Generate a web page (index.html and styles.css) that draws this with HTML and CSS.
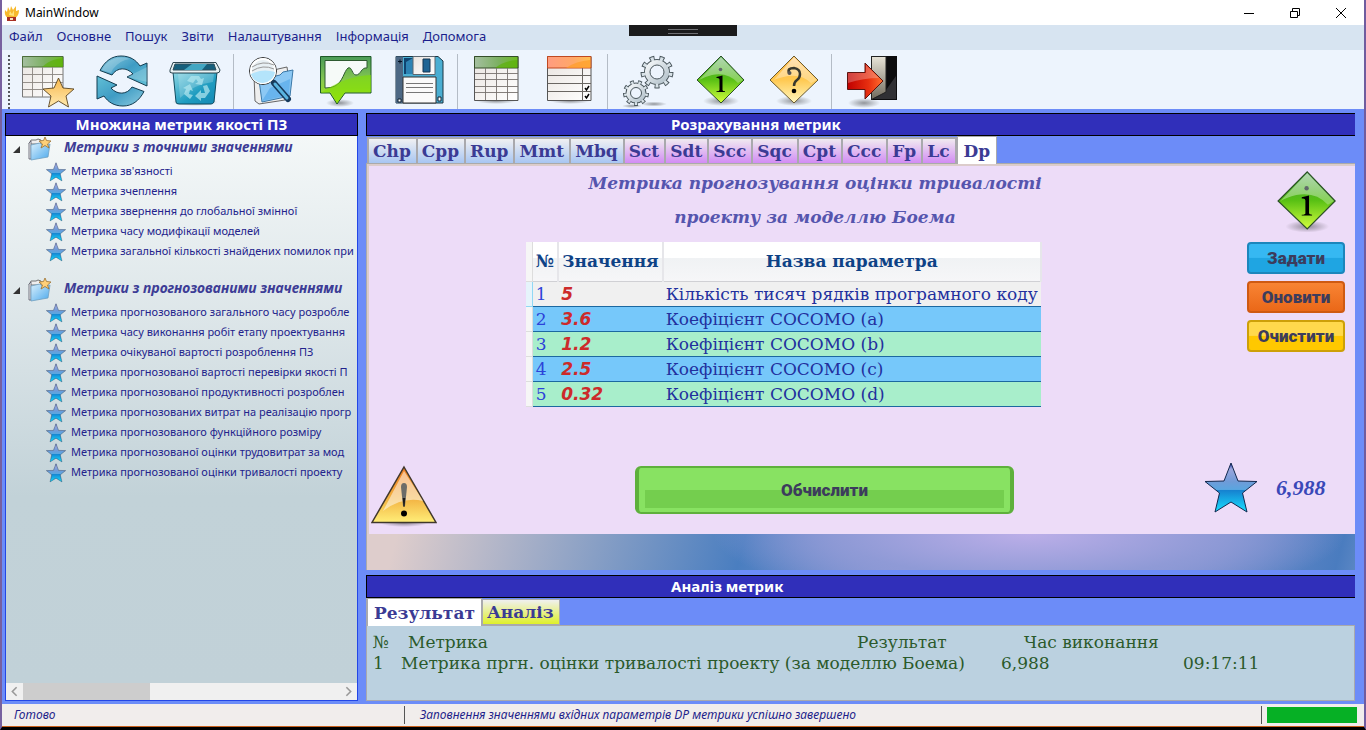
FILE: index.html
```html
<!DOCTYPE html>
<html lang="uk">
<head>
<meta charset="utf-8">
<title>MainWindow</title>
<link rel="stylesheet" href="styles.css">
</head>
<body>
<svg class="defs" aria-hidden="true">
  <defs>
    <linearGradient id="gBlue" x1="0" y1="0" x2="1" y2="1"><stop offset="0" stop-color="#8ccbe0"/><stop offset=".5" stop-color="#3f9cc4"/><stop offset="1" stop-color="#62c0d6"/></linearGradient>
    <linearGradient id="gGreenHead" x1="0" y1="0" x2="1" y2="0"><stop offset="0" stop-color="#a5bfa0"/><stop offset=".55" stop-color="#7cb062"/><stop offset="1" stop-color="#6cbb20"/></linearGradient>
    <linearGradient id="gOrangeHead" x1="0" y1="0" x2="1" y2="0"><stop offset="0" stop-color="#ff9c80"/><stop offset=".6" stop-color="#ffa868"/><stop offset="1" stop-color="#ffc050"/></linearGradient>
    <linearGradient id="gPaper" x1="0" y1="0" x2="1" y2="1"><stop offset="0" stop-color="#e9e4e0"/><stop offset="1" stop-color="#fff"/></linearGradient>
    <linearGradient id="gGold" x1="0" y1="0" x2="0" y2="1"><stop offset="0" stop-color="#f8b84e"/><stop offset="1" stop-color="#ffeab0"/></linearGradient>
    <linearGradient id="gStar" x1="0" y1="0" x2="0" y2="1"><stop offset="0" stop-color="#1b2fa8"/><stop offset=".12" stop-color="#9ba6dd"/><stop offset=".38" stop-color="#6f9bd8"/><stop offset=".54" stop-color="#5aa6e0"/><stop offset=".56" stop-color="#1682d0"/><stop offset="1" stop-color="#18e0ff"/></linearGradient>
    <linearGradient id="gLime" x1="0" y1="0" x2="0" y2="1"><stop offset="0" stop-color="#3f9a3c"/><stop offset=".5" stop-color="#58c014"/><stop offset="1" stop-color="#d4ff3c"/></linearGradient>
    <linearGradient id="gAmber" x1="0" y1="0" x2="0" y2="1"><stop offset="0" stop-color="#ffb848"/><stop offset=".5" stop-color="#ffc850"/><stop offset="1" stop-color="#fff8c0"/></linearGradient>
    <linearGradient id="gGloss" x1="0" y1="0" x2="0" y2="1"><stop offset="0" stop-color="#fff" stop-opacity=".6"/><stop offset="1" stop-color="#fff" stop-opacity=".25"/></linearGradient>
    <linearGradient id="gFolder" x1="0" y1="0" x2="1" y2="1"><stop offset="0" stop-color="#d8effc"/><stop offset="1" stop-color="#4aa8ec"/></linearGradient>
    <linearGradient id="gWarn" x1="0" y1="0" x2="0" y2="1"><stop offset="0" stop-color="#ee7a20"/><stop offset=".55" stop-color="#f2b040"/><stop offset="1" stop-color="#ffee78"/></linearGradient>
    <linearGradient id="gRed" x1="0" y1="0" x2="1" y2="0"><stop offset="0" stop-color="#c00000"/><stop offset=".6" stop-color="#e83010"/><stop offset="1" stop-color="#ff7030"/></linearGradient>
    <linearGradient id="gDoor" x1="0" y1="0" x2="0" y2="1"><stop offset="0" stop-color="#e8e4d8"/><stop offset="1" stop-color="#706a5c"/></linearGradient>
    <linearGradient id="gMetal" x1="0" y1="0" x2="1" y2="1"><stop offset="0" stop-color="#f4f7f9"/><stop offset="1" stop-color="#b4c2cb"/></linearGradient>
    <linearGradient id="gBin" x1="0" y1="0" x2="1" y2="1"><stop offset="0" stop-color="#8fd8e4"/><stop offset=".6" stop-color="#1f9cc0"/><stop offset="1" stop-color="#1488b4"/></linearGradient>
    <linearGradient id="gScreen" x1="0" y1="0" x2="0" y2="1"><stop offset="0" stop-color="#4a9a58"/><stop offset=".5" stop-color="#86c850"/><stop offset="1" stop-color="#a8ec10"/></linearGradient>
    <radialGradient id="gShade"><stop offset="0" stop-color="#222" stop-opacity=".45"/><stop offset="1" stop-color="#222" stop-opacity="0"/></radialGradient>
    <symbol id="star" viewBox="0 0 54 54"><path d="M27 2 L34 20 L53 20.500 L38.500 32 L43 51 L27 41 L11 51 L15.500 32 L1 20.500 L20 20 Z" fill="url(#gStar)" stroke="#12284e" stroke-width="1"/></symbol>
    <symbol id="info" viewBox="0 0 56 56">
      <ellipse cx="29" cy="49" rx="18" ry="5" fill="url(#gShade)"/>
      <path d="M29 4 L52 28 L29 51 L5 28 Z" fill="url(#gLime)" stroke="#2c5028"/>
      <path d="M29 5 L51 28 L46 31 Q36 20 20 23 Q12 25 7 28 Z" fill="url(#gGloss)"/>
      <circle cx="28.500" cy="17.500" r="1.800" fill="#60686a"/>
      <path d="M24.500 25 L30.500 23.500 V38 Q30.500 39.200 33 39.300 V40 H24.500 V39.300 Q27.500 39.200 27.500 38 V27.500 Q27.500 25.500 24.500 26 Z" fill="#000"/>
    </symbol>
    <symbol id="folder" viewBox="0 0 26 26">
      <path d="M2 8 L4 4 L9 4 L11 3 L14 4 L14 8 Z" fill="#eee" stroke="#555" stroke-width=".8"/>
      <path d="M2 7 L4 5 L4 23 L2 23 Z" fill="#f4f4f4" stroke="#556" stroke-width=".8"/>
      <path d="M4 9 L13 7 L15 9 L23 8 L21 21 L4 24 Z" fill="url(#gFolder)" stroke="#6f9fc0" stroke-width=".8"/>
      <path d="M18 1 L19.500 4.500 L24 5 L20.500 8 L22 12 L18 9.500 L14 12 L15.500 8 L12 5 L16.500 4.500 Z" fill="#ffd078" stroke="#9a7030" stroke-width=".8"/>
    </symbol>
  </defs>
</svg>
<div class="window">
  <header class="titlebar">
    <svg class="app-icon" viewBox="0 0 16 16"><path d="M4 13 Q0 11 1 5 L3 7 L4 2 L6 6 L7 1 L9 5 L12 1 L12 6 L15 5 Q15 11 11 13 Z" fill="#f7b92c"/><path d="M5 10 L6 6 L8 9 L10 5 L10 11 Z" fill="#ffe27a"/><path d="M3 12 h9 v4 h-9 Z" fill="#a83024"/><path d="M6 13 h3 v2 h-3 Z" fill="#f6e2c0"/></svg>
    <h1>MainWindow</h1>
    <div class="win-buttons">
      <button type="button" aria-label="Згорнути"><svg viewBox="0 0 12 12"><path d="M1 6.500 H11"/></svg></button>
      <button type="button" aria-label="Відновити"><svg viewBox="0 0 12 12"><path d="M1.500 4.500 H8.500 V10.500 H1.500 Z M3.500 4 V1.500 H10.500 V8.500 H9"/></svg></button>
      <button type="button" aria-label="Закрити"><svg viewBox="0 0 12 12"><path d="M1 1 L11 11 M11 1 L1 11"/></svg></button>
    </div>
  </header>
  <nav class="menubar">
    <button type="button">Файл</button><button type="button">Основне</button><button type="button">Пошук</button><button type="button">Звіти</button><button type="button">Налаштування</button><button type="button">Інформація</button><button type="button">Допомога</button>
    <div class="grip"></div>
  </nav>
  <div class="toolbar">
    <span class="dots"></span>
    <button type="button" aria-label="Нова таблиця"><svg viewBox="0 0 56 56">
      <path d="M2.500 4.500 H43 V45 H2.500 Z" fill="url(#gPaper)" stroke="#777"/>
      <path d="M2.500 4.500 H43 V15 H2.500 Z" fill="url(#gGreenHead)" stroke="#4d6e3a"/>
      <path d="M22 15 Q30 7 43 6 V15 Z" fill="#58b000" opacity=".6"/>
      <path d="M3 22.500 H43 M3 30.500 H43 M3 37.500 H43 M12.500 15 V45 M22.500 15 V45 M32.500 15 V45" stroke="#8a8580" stroke-width=".9" fill="none"/>
      <path d="M38.500 26 L43 36 L54 37 L46 44 L48.500 55 L38.500 49 L28.500 55 L31 44 L23 37 L34 36 Z" fill="url(#gGold)" stroke="#5a4420" stroke-width=".9"/></svg></button>
    <button type="button" aria-label="Оновити"><svg viewBox="0 0 56 56">
      <g fill="url(#gBlue)" stroke="#123c50"><path d="M6 18.500 C11 9 18 4 27 4 C36 4 42 8 46 14 L53 11 V34 L33 25 L39 22 C33 15 23 15 18 23 Z"/>
      <path d="M6 18.500 C11 9 18 4 27 4 C36 4 42 8 46 14 L53 11 V34 L33 25 L39 22 C33 15 23 15 18 23 Z" transform="rotate(180 28 29)"/></g>
      <path d="M8 18 C13 8 24 3 36 7 Q26 8 19 17 L17 21 Z M33 25 L53 15 V30 Z" fill="#fff" opacity=".2"/></svg></button>
    <button type="button" aria-label="Кошик"><svg viewBox="0 0 56 56">
      <ellipse cx="27" cy="50" rx="23" ry="4" fill="url(#gShade)"/>
      <path d="M5 20 H49 L46 50 Q45 52 43 52 H11 Q8 52 8 50 Z" fill="url(#gBin)" stroke="#0f4c60"/>
      <path d="M5 10.500 H48 L52 18 Q52 21 49 21 H4 Q1 21 2 18 Z" fill="#e8f2f4" stroke="#2e4650"/>
      <path d="M7 12 H46 L48 18 H5 Z" fill="#155f7c" stroke="#33505c"/><path d="M16 18 L24 12 H39 L34 18 Z" fill="#42a6c2"/>
      <path d="M10 22 H46 L45 30 Q26 32 12 46 Z" fill="#fff" opacity=".2"/>
      <g fill="#b4e8f0" opacity=".7"><path d="M19 29 L23 24 H31 L33 27 L36 26 L34 33 L27 32 L30 30 L28 27 L25 31 Z"/><path d="M35 34 L39 33 L42 39 L37 46 H33 V49 L27 44 L33 38 V41 H37 Z"/><path d="M22 47 L16 42 L18 37 L15 36 L22 32 L25 39 L22 38 L21 42 L25 43 Z"/></g></svg></button>
    <span class="sep"></span>
    <button type="button" aria-label="Пошук"><svg viewBox="0 0 56 56">
      <path d="M10 24 L34 17 L43 15 L44 22 L41 48 L15 52 L11 49 Z" fill="#eee" stroke="#666"/>
      <path d="M15 28 L36 23 L39 20 L49 18 L46 44 L18 50 Z" fill="#8cc8f4" stroke="#3a78a8"/><path d="M26 36 L46 27 L45 43 L18 49 Z" fill="#50a6ea" opacity=".6"/>
      <circle cx="19" cy="19" r="13.500" fill="#e8f0f4" stroke="#333"/><circle cx="19" cy="19" r="12" fill="none" stroke="#fff" stroke-width="2"/>
      <path d="M8 15 Q19 8 30 13 M8 19 Q19 12 30 17" stroke="#999" fill="none"/><path d="M7 22 Q19 16 31 20 Q30 29 19 31 Q9 30 7 22" fill="#b4e4fb"/>
      <path d="M30 31 L44 47" stroke="#163a5c" stroke-width="6" stroke-linecap="round"/><path d="M31 32 L43 46" stroke="#5ab4e0" stroke-width="3" stroke-linecap="round"/></svg></button>
    <button type="button" aria-label="Графік"><svg viewBox="0 0 56 56">
      <ellipse cx="22" cy="51" rx="14" ry="4" fill="url(#gShade)"/>
      <path d="M2.500 4.500 H53 V41 H27 L19 52 L12 41 H2.500 Z" fill="url(#gScreen)" stroke="#1e5a28"/>
      <path d="M7 8.500 H49 V16 C43 15 43 23 38 23 C34 23 34 14 30 16 C26 19 25 30 17 34 Q14 36 7 36 Z" fill="#f6faf8" stroke="#2e5a30"/>
      <path d="M3 41 Q27 24 53 23 V40 H27 L19 51 L13 40 Z" fill="#80e000" opacity=".6"/></svg></button>
    <button type="button" aria-label="Зберегти"><svg viewBox="0 0 56 56">
      <path d="M4 4.500 H46 L51 9 V51 H4 Z" fill="#4aaed2" stroke="#1a3442"/><path d="M4 4.500 H11 V51 H4 Z" fill="#4d6884"/>
      <path d="M12 6 H21 V22 H12 Z" fill="#0f4470"/><path d="M14 10 L21 6 V22 H14 Z" fill="#2d83b4"/>
      <path d="M21 4.500 H43 V22.500 H21 Z" fill="url(#gPaper)" stroke="#5a6670"/><path d="M31 7 H38 V20 H31 Z" fill="#1e6494" stroke="#143450"/>
      <path d="M11 25 H44 V51 H11 Z" fill="#fafafa" stroke="#333"/><path d="M14 31.500 H41 M14 35.500 H41 M14 40.500 H41" stroke="#777"/>
      <path d="M6 47 h3 v3 h-3 Z M46 45 h3 v4 h-3 Z" fill="#fff" stroke="#123"/><path d="M6 9.500 h4 M8 7.500 v4" stroke="#012"/></svg></button>
    <span class="sep"></span>
    <button type="button" aria-label="Таблиця"><svg viewBox="0 0 56 56">
      <ellipse cx="28" cy="49" rx="20" ry="3" fill="url(#gShade)"/>
      <path d="M6.500 4.500 H50 V48.500 H6.500 Z" fill="url(#gPaper)" stroke="#555"/>
      <path d="M6.500 4.500 H50 V16 H6.500 Z" fill="url(#gGreenHead)" stroke="#344e28"/><path d="M27 16 Q35 9 49 8 V16 Z" fill="#58b000" opacity=".6"/>
      <path d="M7 21.500 H50 M7 27.500 H50 M7 34.500 H50 M7 40.500 H50 M17.500 16 V48 M28.500 16 V48 M39.500 16 V48" stroke="#77726e" stroke-width=".9" fill="none"/></svg></button>
    <button type="button" aria-label="Список"><svg viewBox="0 0 56 56">
      <ellipse cx="28" cy="49" rx="20" ry="3" fill="url(#gShade)"/>
      <path d="M5.500 4.500 H49 V48.500 H5.500 Z" fill="url(#gPaper)" stroke="#555"/>
      <path d="M5.500 4.500 H49 V16 H5.500 Z" fill="url(#gOrangeHead)" stroke="#c04820"/><path d="M24 16 Q34 9 48 8 V16 Z" fill="#ff9c28" opacity=".7"/>
      <path d="M6 23.500 H49 M6 31.500 H49 M6 39.500 H49 M40.500 16 V48" stroke="#6a6662" fill="none"/>
      <path d="M43 36 L44.500 38 L47 34 M43 44 L44.500 46 L47 42" stroke="#000" stroke-width="1.500" fill="none"/></svg></button>
    <span class="sep"></span>
    <button type="button" aria-label="Налаштування"><svg viewBox="0 0 56 56">
      <ellipse cx="36" cy="52" rx="13" ry="2.500" fill="url(#gShade)"/><ellipse cx="14" cy="54" rx="10" ry="2" fill="url(#gShade)"/>
      <g fill="none">
        <circle cx="39" cy="20" r="13.500" pathLength="100" stroke="#4a565c" stroke-width="6" stroke-dasharray="5.500 5.611"/>
        <circle cx="39" cy="20" r="11" stroke="#4a565c" stroke-width="4"/>
        <circle cx="39" cy="20" r="13.500" pathLength="100" stroke="#d8e2e8" stroke-width="4" stroke-dasharray="3.500 7.611" stroke-dashoffset="-1"/>
        <circle cx="39" cy="20" r="9.500" stroke="url(#gMetal)" stroke-width="5"/><circle cx="39" cy="20" r="7" stroke="#4a565c"/>
        <circle cx="18" cy="41" r="10.500" pathLength="100" stroke="#4a565c" stroke-width="5" stroke-dasharray="5.500 5.611"/>
        <circle cx="18" cy="41" r="8.500" stroke="#4a565c" stroke-width="4"/>
        <circle cx="18" cy="41" r="10.500" pathLength="100" stroke="#d8e2e8" stroke-width="3" stroke-dasharray="3.500 7.611" stroke-dashoffset="-1"/>
        <circle cx="18" cy="41" r="7.500" stroke="url(#gMetal)" stroke-width="4"/><circle cx="18" cy="41" r="5.500" stroke="#4a565c"/>
      </g></svg></button>
    <button type="button" aria-label="Інформація"><svg><use href="#info"/></svg></button>
    <button type="button" aria-label="Довідка"><svg viewBox="0 0 56 56">
      <ellipse cx="28" cy="49" rx="18" ry="5" fill="url(#gShade)"/>
      <path d="M28 4 L52 28 L28 51 L4 28 Z" fill="url(#gAmber)" stroke="#6a5a30"/>
      <path d="M28 5 L51 28 L45 31 Q36 22 22 24 Q12 26 8 28 Z" fill="url(#gGloss)"/>
      <path d="M23 21 Q21 16 28 16 Q34 17 34 22 Q34 26 31 28 Q28 30 28 34" fill="none" stroke="#38382e" stroke-width="2.500"/><circle cx="23.500" cy="21" r="2" fill="#555"/><circle cx="28" cy="39" r="2.300" fill="#000"/></svg></button>
    <span class="sep"></span>
    <button type="button" aria-label="Вихід"><svg viewBox="0 0 56 56">
      <ellipse cx="22" cy="51" rx="16" ry="5" fill="url(#gShade)"/>
      <path d="M29 4 H55 V48 H29 Z" fill="#0c0c0e"/><path d="M44 38 L54 24 V47 H31 L44 40 Z" fill="#303034"/>
      <path d="M29.500 4.500 H44 V40 L29.500 47.500 Z" fill="url(#gDoor)" stroke="#222"/>
      <path d="M5.500 20.500 H23 V11 L41 29 L23 47 V37.500 H5.500 Z" fill="url(#gRed)" stroke="#5c1410"/><path d="M6 21 H24 V13 L37 26 Q22 26 6 31 Z" fill="#fff" opacity=".25"/></svg></button>
  </div>

  <main class="workspace">
    <section class="metrics">
      <h2 class="caption">Множина метрик якості ПЗ</h2>
      <div class="tree-box">
        <div class="tree">
          <div class="branch">
            <h3><i class="arrow"></i><svg><use href="#folder"/></svg>Метрики з точними значеннями</h3>
            <ul>
              <li><svg><use href="#star"/></svg>Метрика зв'язності</li>
              <li><svg><use href="#star"/></svg>Метрика зчеплення</li>
              <li><svg><use href="#star"/></svg>Метрика звернення до глобальної змінної</li>
              <li><svg><use href="#star"/></svg>Метрика часу модифікації моделей</li>
              <li><svg><use href="#star"/></svg>Метрика загальної кількості знайдених помилок при</li>
            </ul>
          </div>
          <div class="branch">
            <h3><i class="arrow"></i><svg><use href="#folder"/></svg>Метрики з прогнозованими значеннями</h3>
            <ul>
              <li><svg><use href="#star"/></svg>Метрика прогнозованого загального часу розробле</li>
              <li><svg><use href="#star"/></svg>Метрика часу виконання робіт етапу проектування</li>
              <li><svg><use href="#star"/></svg>Метрика очікуваної вартості розроблення ПЗ</li>
              <li><svg><use href="#star"/></svg>Метрика прогнозованої вартості перевірки якості П</li>
              <li><svg><use href="#star"/></svg>Метрика прогнозованої продуктивності розроблен</li>
              <li><svg><use href="#star"/></svg>Метрика прогнозованих витрат на реалізацію прогр</li>
              <li><svg><use href="#star"/></svg>Метрика прогнозованого функційного розміру</li>
              <li><svg><use href="#star"/></svg>Метрика прогнозованої оцінки трудовитрат за мод</li>
              <li><svg><use href="#star"/></svg>Метрика прогнозованої оцінки тривалості проекту</li>
            </ul>
          </div>
        </div>
        <div class="hscroll"><svg viewBox="0 0 16 16"><path d="M10 4 L6 8 L10 12"/></svg><div class="track"><div class="thumb"></div></div><svg viewBox="0 0 16 16"><path d="M6 4 L10 8 L6 12"/></svg></div>
      </div>
    </section>

    <div class="right">
      <section class="calc">
        <h2 class="caption wide">Розрахування метрик</h2>
        <div class="tabs" role="tablist">
          <button type="button" role="tab">Chp</button><button type="button" role="tab">Cpp</button><button type="button" role="tab">Rup</button><button type="button" role="tab">Mmt</button><button type="button" role="tab">Mbq</button><button type="button" role="tab" class="violet">Sct</button><button type="button" role="tab" class="violet">Sdt</button><button type="button" role="tab" class="violet">Scc</button><button type="button" role="tab" class="violet">Sqc</button><button type="button" role="tab" class="violet">Cpt</button><button type="button" role="tab" class="violet">Ccc</button><button type="button" role="tab" class="violet">Fp</button><button type="button" role="tab" class="violet">Lc</button><button type="button" role="tab" class="active" aria-selected="true">Dp</button>
        </div>
        <div class="sheet">
          <div class="form">
            <div class="upper">
              <div class="center">
                <h3>Метрика прогнозування оцінки тривалості<br>проекту за моделлю Боема</h3>
                <table class="params">
                  <thead><tr><th class="rowhead"></th><th>№</th><th>Значення</th><th>Назва параметра</th></tr></thead>
                  <tbody>
                    <tr class="picked"><td class="rowhead"></td><td>1</td><td>5</td><td>Кількість тисяч рядків програмного коду</td></tr>
                    <tr><td class="rowhead"></td><td>2</td><td>3.6</td><td>Коефіцієнт COCOMO (a)</td></tr>
                    <tr><td class="rowhead"></td><td>3</td><td>1.2</td><td>Коефіцієнт COCOMO (b)</td></tr>
                    <tr><td class="rowhead"></td><td>4</td><td>2.5</td><td>Коефіцієнт COCOMO (c)</td></tr>
                    <tr><td class="rowhead"></td><td>5</td><td>0.32</td><td>Коефіцієнт COCOMO (d)</td></tr>
                  </tbody>
                </table>
              </div>
              <div class="actions">
                <svg class="big-info"><use href="#info"/></svg>
                <button type="button" class="set">Задати</button>
                <button type="button" class="update">Оновити</button>
                <button type="button" class="clear">Очистити</button>
              </div>
            </div>
            <div class="lower">
              <svg class="warn" viewBox="0 0 66 62">
                <ellipse cx="33" cy="58" rx="24" ry="4" fill="url(#gShade)"/>
                <path d="M33 2 L65 57.500 H1 Z" fill="url(#gWarn)" stroke="#40382c" stroke-width="1.500"/>
                <path d="M33 6 L52 36 Q32 31 12 46 Z" fill="#fff" opacity=".5"/>
                <path d="M30 22 Q30 18 33 18 Q36 18 36 22 L34 41 H32 Z" fill="#6c6c68"/><path d="M31.700 33 H34.300 L33.500 42 H32.500 Z" fill="#1c1a16"/><circle cx="33" cy="48.500" r="3" fill="#000"/></svg>
              <button type="button" class="compute">Обчислити</button>
              <svg class="big-star"><use href="#star"/></svg>
              <output>6,988</output>
            </div>
          </div>
          <div class="strip"></div>
        </div>
      </section>

      <section class="analysis">
        <h2 class="caption wide">Аналіз метрик</h2>
        <div class="tabs second" role="tablist">
          <button type="button" role="tab" class="active" aria-selected="true">Результат</button><button type="button" role="tab" class="yellow">Аналіз</button>
        </div>
        <table class="results">
          <thead><tr><th>№</th><th>Метрика</th><th>Результат</th><th>Час виконання</th></tr></thead>
          <tbody><tr><td>1</td><td>Метрика пргн. оцінки тривалості проекту (за моделлю Боема)</td><td>6,988</td><td>09:17:11</td></tr></tbody>
        </table>
      </section>
    </div>
  </main>
  <footer class="status">
    <span class="ready">Готово</span>
    <span class="message">Заповнення значеннями вхідних параметрів DP метрики успішно завершено</span>
    <progress value="100" max="100" aria-label="Виконання"></progress>
  </footer>
</div>
</body>
</html>
```
FILE: styles.css
```css
* { box-sizing: border-box; }
body { margin: 0; background: #000; font-family: "Noto Sans", "Open Sans", sans-serif; }
h1, h2, h3, ul { margin: 0; padding: 0; font-size: inherit; }
button { margin: 0; padding: 0; border: 0; background: none; font: inherit; color: inherit; }
.defs { position: absolute; width: 0; height: 0; }

.window { display: flex; flex-direction: column; min-height: 100vh; border-left: 2px solid #77609f; border-right: 2px solid #6f5c9f; border-bottom: 3px solid #000; }

.titlebar { display: flex; align-items: center; height: 25px; padding-left: 2px; background: #fff; }
.app-icon { width: 16px; height: 16px; }
.titlebar h1 { flex: 1; padding-left: 5px; font-size: 12px; font-weight: 400; color: #000; }
.win-buttons { display: flex; }
.win-buttons button { display: flex; justify-content: center; width: 46px; }
.win-buttons svg { width: 12px; height: 12px; fill: none; stroke: #000; }

.menubar { position: relative; display: flex; gap: 14px; height: 25px; padding-left: 7px; background: #d7e4f1; font-size: 13px; line-height: 22px; color: #1b1e8c; }
.menubar button { height: 22px; }
.grip { position: absolute; top: 0; left: 46%; width: 108px; height: 11px; background: #1b1b1c; }
.grip::after { content: ""; display: block; width: 30px; height: 3px; margin: 4px auto; border: solid #6e6e72; border-width: 1px 0; }

.toolbar { display: flex; height: 59px; padding-left: 5px; background: #edf4fd; }
.toolbar button { display: flex; align-items: center; justify-content: center; width: 74px; height: 60px; }
.toolbar svg { width: 56px; height: 56px; }
.dots { width: 4px; margin: 5px 0 0; background: repeating-linear-gradient(#56585c 0 2px, transparent 2px 4px) 1px 0 / 2px 100% no-repeat; }
.sep { width: 1px; margin: 4px 1px 0 0; background: #b4bcc6; }

.workspace { flex: 1; display: flex; gap: 8px; padding: 4px 9px 3px 3px; background: #6c8cf8; }
.caption { height: 23px; border: 1px solid #000; background: #302fba; color: #fff; font-size: 15px; line-height: 20px; font-weight: 700; text-align: center; }
.caption.wide { border-right: 0; padding-left: 304px; text-align: left; }

.metrics { flex: 0 0 353px; min-width: 0; display: flex; flex-direction: column; }
.tree-box { flex: 1; display: flex; flex-direction: column; border: solid #2346e6; border-width: 0 1px 1px; }
.tree { flex: 1; overflow: hidden; background: linear-gradient(#f4f8f8, #dde6e9 33%, #c2d2d8 66%, #c1d1d8); color: #23238c; }
.branch { padding-bottom: 16px; }
.branch h3 { display: flex; height: 25px; padding-left: 7px; font-size: 14px; line-height: 22px; font-weight: 700; font-style: italic; white-space: nowrap; color: #3d3d96; }
.branch h3 svg { width: 26px; height: 26px; margin: 0 11px 0 7px; }
.arrow { width: 7px; height: 7px; margin-top: 10px; background: #333; clip-path: polygon(100% 0, 100% 100%, 0 100%); }
.branch ul { list-style: none; font-size: 11px; line-height: 20px; }
.branch li { display: flex; height: 20px; padding-left: 40px; white-space: nowrap; }
.branch li svg { flex: none; width: 20px; height: 20px; margin: 1px 5px 0 0; }
.hscroll { display: flex; height: 17px; background: #f0f0f0; }
.hscroll svg { width: 17px; height: 17px; fill: none; stroke: #999; stroke-width: 1.5; }
.track { flex: 1; }
.thumb { width: 40%; height: 100%; background: #cdcdcd; }

.right { flex: 1; min-width: 0; display: flex; flex-direction: column; gap: 5px; }
.calc { flex: 1; display: flex; flex-direction: column; }
.tabs { display: flex; align-items: flex-end; height: 28px; padding-left: 1px; border-bottom: 1px solid #aaa; font-family: "DejaVu Serif", serif; font-size: 17px; font-weight: 700; line-height: 24px; color: #3b3b94; }
.tabs button { height: 26px; padding: 0 5px 0 4px; border: solid #a9a9ad; border-width: 2px 2px 0 0; background: linear-gradient(#f0f0f2, #a8c6f2); }
.tabs button:first-child { border-left-width: 2px; }
.tabs .violet { background: linear-gradient(#f0eaf0, #d28cf4); }
.tabs .yellow { background: linear-gradient(#f0f0f0, #dff02a); }
.tabs .active { height: 28px; margin-bottom: -1px; padding: 0 6px; border-width: 1px 1px 0; background: #fff; }

.sheet { flex: 1; display: flex; flex-direction: column; border-left: 1px solid #aaa; background: #dccccb; padding: 2px 0 0; }
.form { flex: 1; display: flex; flex-direction: column; justify-content: space-between; margin-left: 2px; background: #eddcf8; }
.strip { height: 36px; background: radial-gradient(ellipse 32% 200% at 67% 0, #bbaee8, #8f9ad6 60%, transparent), linear-gradient(105deg, #decdcc 3%, #4a7ec0 38%, #8f98d4 55%, #8f98d4 77%, #4a7cbf 98%, #5a86c4); }
.upper { display: flex; }
.center { flex: 1; display: flex; flex-direction: column; align-items: center; }
.center h3 { padding-left: 62px; text-align: center; font: italic 700 17px/34px "DejaVu Serif", serif; color: #5555ae; }
.params { margin-top: 8px; border-collapse: collapse; font: 17px/24px "DejaVu Serif", serif; color: #22309e; }
.params th { height: 39px; padding: 0 3px; border-right: 2px solid #e6e6ea; border-bottom: 1px solid #d0d0d4; background: linear-gradient(#fff 40%, #f0f2f4 42%, #f6f6f8); color: #0e4286; }
.params td { height: 25px; padding: 0 3px; border-bottom: 1px solid #1c68a0; white-space: nowrap; }
.params tbody tr:nth-child(even) { background: #76c8fa; }
.params tbody tr:nth-child(odd) { background: #a8eecb; }
.params tbody tr.picked { background: #f0f0f0; }
.params td:nth-child(2) { color: #2c42d8; }
.params td:nth-child(3) { color: #cd2a2a; font: italic 700 17px/24px "DejaVu Sans", sans-serif; }
.params .rowhead { width: 6px; padding: 0; background: #f6f6f6; border: solid #ddd; border-width: 0 1px 1px 0; }
.params .picked .rowhead { border-color: #90d8f4; background: #e6f4fb; }
.actions { display: flex; flex-direction: column; align-items: flex-end; gap: 7px; width: 156px; padding: 1px 10px 0 0; }
.big-info { width: 70px; height: 68px; margin-right: 4px; }
.actions button, .compute { border: 2px solid; border-radius: 4px; font: 900 17px/28px Roboto, "Liberation Sans", sans-serif; color: #3c3c5c; }
.actions button { width: 98px; height: 32px; }
.actions .set { border-color: #1c86bc; background: linear-gradient(#36b8f2 48%, #1fa5e2 50%); }
.actions .update { border-color: #cf5a12; background: linear-gradient(#f88434, #ea6818); }
.actions .clear { border-color: #cda008; background: linear-gradient(#ffd94c 48%, #ffc800 50%); }
.lower { display: flex; align-items: flex-start; padding: 0 10px 7px 2px; }
.warn { width: 66px; height: 62px; margin-top: 4px; }
.compute { flex: 1; height: 48px; margin: 5px 190px 0 198px; border: solid #5eb03c; border-width: 2px 4px; border-radius: 6px; background: linear-gradient(#74ce4e, #74ce4e) center 22px / calc(100% - 12px) 18px no-repeat #88e262; }
.big-star { width: 54px; height: 54px; }
output { width: 87px; padding-left: 18px; font: italic 700 22px/54px "Liberation Serif", serif; color: #3a48b8; }

.second { padding: 0; }
.second button { border-width: 1px; }
.results { display: block; height: 75px; padding: 6px; border: 1px solid #a9a9ad; border-top: 0; background: #bbd1e0; font: 17px/21px "DejaVu Serif", serif; color: #2b5a2b; }
.results thead, .results tbody { display: block; }
.results tr { display: grid; grid-template-columns: 28px 600px 182px 1fr; }
.results thead tr { grid-template-columns: 35px 449px 167px 1fr; }
.results th, .results td { padding: 0; text-align: left; font-weight: 400; white-space: nowrap; }

.status { display: flex; align-items: center; height: 23px; padding-right: 7px; border-bottom: 1px solid #c8601c; background: #f1edec; font-size: 12px; font-style: italic; color: #1e1e8a; }
.status span { line-height: 18px; border-right: 1px solid #555; }
.ready { flex: 0 0 403px; padding-left: 12px; }
.message { flex: 1; padding-left: 15px; }
progress { width: 90px; height: 16px; margin-left: 5px; appearance: none; border: 0; background: #06b025; }
progress::-webkit-progress-bar { background: #06b025; }
progress::-webkit-progress-value { background: #06b025; }
```
